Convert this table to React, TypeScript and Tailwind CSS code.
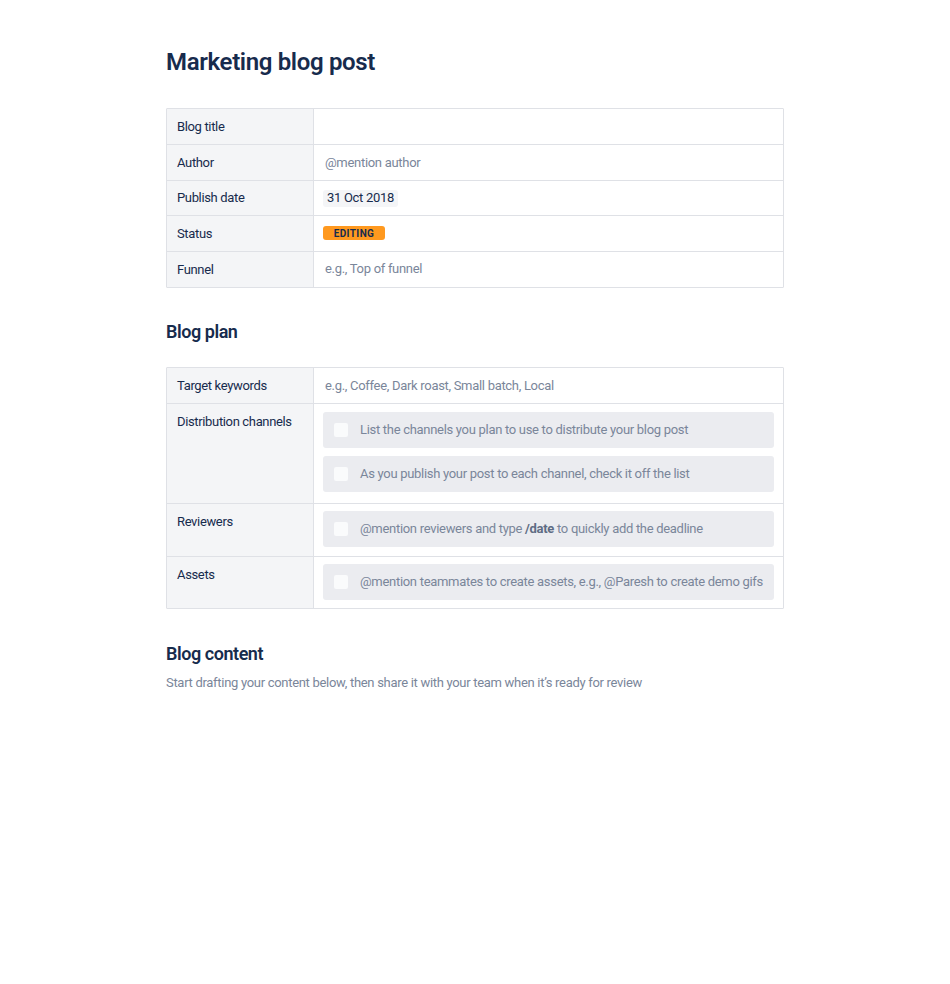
import React from "react";

const font = { fontFamily: 'Roboto, "Noto Sans", "Liberation Sans", sans-serif' };

function Row({ label, children, h, top = false, pt = "pt-[7px]" }: { label: string; children?: React.ReactNode; h: string; top?: boolean; pt?: string }) {
  return (
    <div className={`flex border-t border-[#dfe1e6] first:border-t-0 ${h}`}>
      <div className={`w-[147px] shrink-0 bg-[#f4f5f7] border-r border-[#dfe1e6] px-[10px] flex ${top ? "items-start pt-[8px]" : "items-center"} text-[13px] tracking-[-0.35px] text-[#172b4d]`}>
        {label}
      </div>
      <div className={`flex-1 flex ${top ? `px-[9px] flex-col gap-2 justify-start ${pt}` : "pl-[11px] pr-[9px] items-center"} text-[13px] tracking-[-0.3px]`}>
        {children}
      </div>
    </div>
  );
}

function Task({ children }: { children: React.ReactNode }) {
  return (
    <div className="h-[36px] rounded-[3px] bg-[#ebecf0] flex items-center pl-[11px] text-[13px] tracking-[-0.3px] text-[#7a869a] whitespace-nowrap">
      <span className="w-[14px] h-[14px] rounded-[2px] bg-[#fafbfc] mr-[12px] shrink-0" />
      <span>{children}</span>
    </div>
  );
}

export default function App() {
  return (
    <div className="min-h-[984px] bg-white" style={font}>
      <div className="w-[618px] ml-[166px] pt-[47px]">
        <h1 className="text-[24px] leading-[30px] font-semibold text-[#172b4d] tracking-[-0.35px]">Marketing blog post</h1>

        <div className="mt-[31px] border border-[#dfe1e6] rounded-[1px]">
          <Row label="Blog title" h="h-[35px]" />
          <Row label="Author" h="h-[36px]">
            <span className="text-[#7a869a]">@mention author</span>
          </Row>
          <Row label="Publish date" h="h-[35px]">
            <span className="-ml-[2px] bg-[#f4f5f7] rounded-[3px] px-[4px] h-[17px] flex items-center text-[#172b4d]">31 Oct 2018</span>
          </Row>
          <Row label="Status" h="h-[36px]">
            <span className="-ml-[2px] bg-[#ff991f] rounded-[3px] w-[62px] h-[14px] flex items-center justify-center text-[10px] font-bold tracking-[0.4px] text-[#172b4d] -mt-[1px]">EDITING</span>
          </Row>
          <Row label="Funnel" h="h-[36px]">
            <span className="text-[#7a869a] -mt-[2px]">e.g., Top of funnel</span>
          </Row>
        </div>

        <h2 className="mt-[32px] text-[18px] leading-[24px] font-semibold text-[#172b4d] tracking-[-0.45px]">Blog plan</h2>

        <div className="mt-[23px] border border-[#dfe1e6] rounded-[1px]">
          <Row label="Target keywords" h="h-[35px]">
            <span className="text-[#7a869a]">e.g., Coffee, Dark roast, Small batch, Local</span>
          </Row>
          <Row label="Distribution channels" h="h-[100px]" top pt="pt-[8px]">
            <Task>List the channels you plan to use to distribute your blog post</Task>
            <Task>As you publish your post to each channel, check it off the list</Task>
          </Row>
          <Row label="Reviewers" h="h-[53px]" top>
            <Task>
              @mention reviewers and type <b className="font-bold text-[#5e6c84]">/date</b> to quickly add the deadline
            </Task>
          </Row>
          <Row label="Assets" h="h-[52px]" top>
            <Task>@mention teammates to create assets, e.g., @Paresh to create demo gifs</Task>
          </Row>
        </div>

        <h2 className="mt-[33px] text-[18px] leading-[24px] font-semibold text-[#172b4d] tracking-[-0.45px]">Blog content</h2>
        <p className="mt-[8px] text-[13px] leading-[18px] tracking-[-0.3px] text-[#7a869a]">
          Start drafting your content below, then share it with your team when it’s ready for review
        </p>
      </div>
    </div>
  );
}
